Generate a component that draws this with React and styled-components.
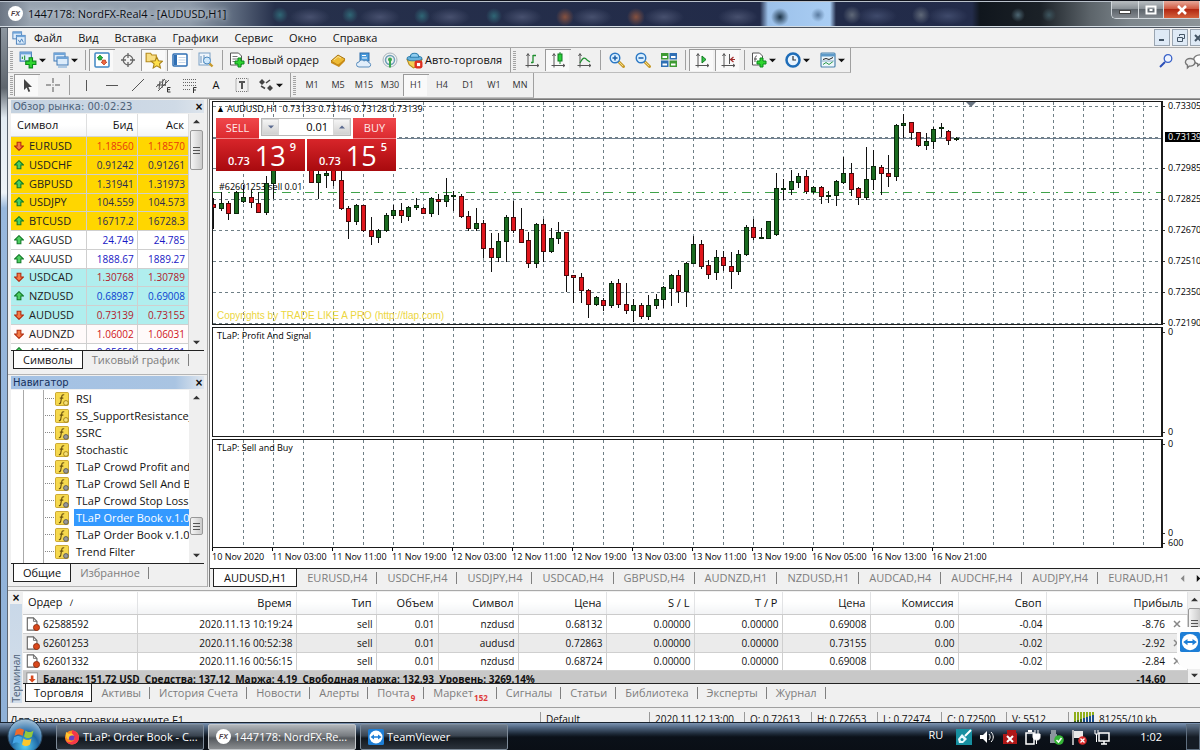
import React, { useState } from 'react';
import styled, { createGlobalStyle, css } from 'styled-components';

const GlobalStyle = createGlobalStyle`
  * {
    box-sizing: border-box;
  }
  body {
    margin: 0;
    background: #f0f0f0;
    font-family: 'Open Sans', 'Noto Sans', sans-serif;
    font-size: 11px;
    line-height: 16px;
    color: #111;
  }
  button, input {
    font: inherit;
    color: inherit;
    margin: 0;
    padding: 0;
    border: 0;
    background: none;
  }
  ul {
    list-style: none;
    margin: 0;
    padding: 0;
  }
`;

const Page = styled.div`
  display: flex;
  flex-direction: column;
  min-height: 100vh;
  overflow: hidden;
`;

/* ---------- title bar ---------- */

const TitleBar = styled.header`
  display: flex;
  align-items: flex-start;
  height: 28px;
  border-top: 1px solid #10131c;
  border-bottom: 1px solid #4b535e;
  box-shadow: inset 0 1px 0 #b9c1cb, inset 0 -1px 0 #d5dde4;
  background:
    radial-gradient(circle at 280px 14px, #2f6675 0, transparent 8px),
    radial-gradient(circle at 350px 14px, #2f6675 0, transparent 8px),
    radial-gradient(circle at 422px 15px, #2f6675 0, transparent 8px),
    radial-gradient(circle at 494px 15px, #2f6675 0, transparent 8px),
    radial-gradient(circle at 565px 16px, #86513f 0, transparent 9px),
    radial-gradient(circle at 636px 16px, #86513f 0, transparent 9px),
    radial-gradient(ellipse at 709px 15px, #a32a3c 0, transparent 10px),
    radial-gradient(circle at 780px 16px, #1d3448 0, transparent 9px),
    radial-gradient(circle at 818px 14px, #5a7ba0 0, transparent 7px),
    radial-gradient(circle at 852px 14px, #5f6878 0, transparent 9px),
    radial-gradient(circle at 921px 14px, #5f6878 0, transparent 9px),
    radial-gradient(circle at 1018px 14px, #4d6672 0, transparent 7px),
    radial-gradient(circle at 1049px 14px, #3d555e 0, transparent 7px),
    radial-gradient(ellipse 20px 9px at 310px 16px, #47506e, transparent),
    radial-gradient(ellipse 20px 9px at 380px 16px, #47506e, transparent),
    radial-gradient(ellipse 20px 9px at 450px 16px, #47506e, transparent),
    radial-gradient(ellipse 20px 9px at 522px 16px, #47506e, transparent),
    radial-gradient(ellipse 20px 9px at 592px 16px, #47506e, transparent),
    radial-gradient(ellipse 20px 9px at 664px 16px, #47506e, transparent),
    radial-gradient(ellipse 20px 9px at 738px 16px, #47506e, transparent),
    radial-gradient(ellipse 20px 9px at 877px 15px, #3f4a6b, transparent),
    radial-gradient(ellipse 20px 9px at 948px 15px, #3f4a6b, transparent),
    linear-gradient(90deg, #6c7684 0, #98a3b0 30px, #8e9aa9 190px, #5f6c80 232px, #26304b 275px, #222b49 760px,
      #9cc1ea 768px, #a9cdf3 830px, #222b49 836px, #232c4a 972px, #10161d 980px, #1b2127 1040px, #5c646a 1090px, #7d868c 1130px, #8c9499 100%);
`;

const TitleText = styled.h1`
  flex: 1;
  margin: 0;
  padding: 5px 0 0 5px;
  font-size: 11px;
  font-weight: 400;
  line-height: 16px;
  color: #0b0e14;
  text-shadow: 0 0 6px #d8e0e8, 0 0 4px #c4ced9;
  white-space: nowrap;
`;

const FxLogo = styled.span`
  flex: none;
  display: flex;
  align-items: center;
  justify-content: center;
  width: 15px;
  height: 15px;
  margin: ${p => p.$margin || '0'};
  border-radius: 50%;
  background: #fff;
  color: #4b3a44;
  font: italic 700 7px 'Liberation Sans', sans-serif;
`;

const WindowButtons = styled.div`
  display: flex;
  height: 18px;
  border: 1px solid #cfd5da;
  border-width: 0 0 1px 1px;
  border-radius: 0 0 0 5px;
  overflow: hidden;
`;

const WindowButton = styled.button`
  display: flex;
  align-items: center;
  justify-content: center;
  width: ${p => p.$width}px;
  border-right: 1px solid #d8dde0;
  background: ${p => p.$close
    ? 'linear-gradient(#e7a99a, #d15a42 45%, #b22812 50%, #d4613c)'
    : 'linear-gradient(#b9bec2, #8b9298 45%, #5d646b 50%, #83898f)'};
`;

/* ---------- client area ---------- */

const Frame = styled.div`
  flex: 1;
  display: grid;
  grid-template-columns: 8px 1fr;
`;

const Edge = styled.div`
  border-left: 1px solid #30353d;
  border-right: 1px solid #5b6470;
  background: linear-gradient(#8d969f 0, #5e656d 60px, #e3ebf2 90px, #eef3f8 165px, #98b8dd 180px, #8fb1d8 100%);
`;

const Client = styled.div`
  display: flex;
  flex-direction: column;
  min-width: 0;
  background: #f0f0f0;
`;

const MenuBar = styled.nav`
  display: flex;
  align-items: center;
  height: 20px;
  padding-left: 4px;
  background: #f2f2f2;
  border-bottom: 1px solid #a9a9a9;
`;

const MenuItem = styled.button`
  padding: 0 8px;
  font-size: 11px;
`;

const MdiButtons = styled.div`
  display: flex;
  gap: 2px;
  margin: 0 -6px 0 auto;
`;

const MdiButton = styled.button`
  display: flex;
  align-items: center;
  justify-content: center;
  width: 16px;
  height: 17px;
  border: 1px solid #9aa5b1;
  background: #dfeaf6;
`;

const ToolRow = styled.div`
  display: flex;
  height: 25px;
`;

const ToolStrip = styled.div`
  display: flex;
  align-items: center;
  padding-left: 2px;
  border-right: 1px solid #a0a0a0;
  border-bottom: 1px solid #bdbdbd;
`;

const Grip = styled.span`
  width: 3px;
  height: 19px;
  margin-right: ${p => (p.$tight ? 1 : 3)}px;
  background: repeating-linear-gradient(#a4a4a4 0 1px, #f0f0f0 1px 2px);
`;

const Divider = styled.span`
  width: 1px;
  height: 20px;
  margin: 0 3px;
  background: #a0a0a0;
`;

const ToolButton = styled.button`
  display: flex;
  align-items: center;
  justify-content: ${p => (p.$wide ? 'flex-start' : 'center')};
  gap: 2px;
  width: ${p => p.$wide || 26}px;
  height: 22px;
  padding-left: ${p => (p.$wide ? 3 : 0)}px;
  font-size: ${p => p.$size || 11}px;
  color: ${p => (p.$size ? '#333' : '#111')};
  white-space: nowrap;
  ${p => p.$pressed && css`
    background: #f9f9f9;
    box-shadow: inset 1px 1px 0 #9a9a9a, inset -2px 0 0 #f0f0f0;
  `}
`;

const RightTools = styled.div`
  display: flex;
  align-items: center;
  gap: 7px;
  margin: 0 -5px 0 auto;
`;

const Work = styled.main`
  flex: 1;
  display: grid;
  grid-template-columns: 200px 1fr;
  border-top: 1px solid #9c9c9c;
`;

/* ---------- side panels ---------- */

const Sidebar = styled.aside`
  display: flex;
  flex-direction: column;
  border-right: 1px solid #a8a8a8;
`;

const Panel = styled.section`
  display: flex;
  flex-direction: column;
  flex: ${p => p.$share} 1 0;
  padding: 1px 3px ${p => p.$bottom}px 3px;
  min-height: 120px;
  border-bottom: 1px solid #b5b5b5;
`;

const PanelTitle = styled.h2`
  display: flex;
  align-items: center;
  justify-content: space-between;
  height: 13px;
  margin: 0 0 1px;
  padding: 0 0 0 2px;
  font-size: 10px;
  font-weight: 400;
  font-family: 'DejaVu Sans', sans-serif;
  line-height: 12px;
  white-space: nowrap;
  color: ${p => (p.$active ? '#15305c' : '#4d6178')};
  background: ${p => (p.$active
    ? 'linear-gradient(90deg, #a3c1e4, #a9c4e2 85%, #dfe6ee)'
    : 'linear-gradient(90deg, #c4d2e0, #cfdae6 85%, #dde4ec)')};
`;

const CloseX = styled.button`
  font: 700 12px/10px 'Liberation Sans', sans-serif;
  width: 10px;
  color: #111;
`;

const PanelBody = styled.div`
  flex: 1 1 0;
  display: grid;
  grid-template-columns: 1fr 15px;
  min-height: 0;
  overflow: hidden;
  background: #fff;
`;

const Clip = styled.div`
  min-width: 0;
  min-height: 0;
  overflow: hidden;
`;

const ScrollTrack = styled.div`
  display: flex;
  flex-direction: column;
  justify-content: space-between;
  align-items: center;
  padding: 4px 1px;
  background: #efefef;
`;

const Thumb = styled.div`
  display: flex;
  align-items: center;
  justify-content: center;
  width: 13px;
  height: ${p => p.$size}px;
  margin-top: ${p => (p.$low ? 'auto' : '5px')};
  margin-bottom: ${p => (p.$low ? '17px' : 'auto')};
  border: 1px solid #989898;
  border-radius: 2px;
  background: linear-gradient(90deg, #f5f5f5, #dcdcdc 60%, #cbcbcb);
`;

const Watch = styled.table`
  width: 100%;
  table-layout: fixed;
  border-collapse: collapse;
  th {
    height: 22px;
    padding: 0 4px 0 6px;
    font-weight: 400;
    text-align: right;
    border-right: 1px solid #dedfe0;
    border-bottom: 1px solid #d5d5d5;
    background: linear-gradient(#fff 50%, #f3f4f6);
  }
  th:first-child {
    width: 75px;
    text-align: left;
  }
  td {
    padding: 0 3px;
    text-align: right;
    border-right: 1px solid #cfcfcf;
    border-bottom: 1px solid #cfcfcf;
    line-height: 14px;
  }
`;

const tones = { gold: '#ffd600', white: '#fff', aqua: '#b0eeee', snow: '#fffafa' };

const WatchRow = styled.tr`
  height: 19px;
  background: ${p => tones[p.$tone]};
  &:nth-child(4n) {
    height: 18px;
  }
  td {
    font-size: 10px;
    color: ${p => p.$color};
  }
`;

const SymbolName = styled.div`
  display: flex;
  align-items: center;
  gap: 5px;
  font-size: 11px;
  color: #222;
`;

const Tabs = styled.div`
  display: flex;
  height: ${p => p.$height || 19}px;
  padding-left: 2px;
  border-top: 1px solid #222;
  background: #f0f0f0;
  overflow: hidden;
  flex: none;
`;

const Tab = styled.button`
  display: flex;
  align-items: center;
  height: 18px;
  font-size: 11px;
  white-space: nowrap;
  color: #7d7d7d;
  padding: 0 ${p => p.$pad || 9}px;
  position: relative;
  &::after {
    content: '';
    width: 1px;
    height: 12px;
    background: #808080;
    position: absolute;
    right: 0;
    top: 3px;
  }
  ${p => p.$active && css`
    color: #111;
    background: #fff;
    border: 1px solid #222;
    border-top: 0;
    &::after { display: none; }
  `}
`;

const TabCount = styled.sub`
  align-self: flex-end;
  font: 700 8px/9px 'Open Sans', sans-serif;
  color: #e03a3a;
  margin-left: 1px;
`;

const Tree = styled.ul`
  height: 100%;
  padding-left: 12px;
  background:
    linear-gradient(90deg, transparent 12px, #aaa 12px 13px, transparent 13px 32px, #aaa 32px 33px, transparent 33px);
`;

const TreeItem = styled.li`
  display: flex;
  align-items: center;
  height: 17px;
  padding-left: 22px;
`;

const Branch = styled.span`
  flex: none;
  width: 9px;
  margin-right: 1px;
  border-top: 1px dotted #888;
`;

const TreeLabel = styled.button`
  flex: 1;
  height: 17px;
  margin-left: 5px;
  padding-left: 2px;
  text-align: left;
  white-space: nowrap;
  color: ${p => (p.$selected ? '#fff' : '#111')};
  background: ${p => (p.$selected ? '#3399ff' : 'transparent')};
`;

/* ---------- chart ---------- */

const ChartArea = styled.section`
  display: flex;
  flex-direction: column;
  min-width: 0;
  margin-left: 1px;
  border-left: 1px solid #777;
  border-top: 1px solid #777;
`;

const ChartBody = styled.div`
  flex: 1;
  display: flex;
  flex-direction: column;
  gap: 2px;
  padding: 1px 0 0 2px;
  background: #fff;
  font-size: 9px;
  line-height: 12px;
  color: #000;
`;

const PaneRow = styled.div`
  flex: ${p => p.$share} 1 0;
  display: grid;
  grid-template-columns: 1fr 37px;
  grid-template-rows: minmax(0, 1fr);
  min-height: 70px;
`;

const Plot = styled.div`
  position: relative;
  border: 1px solid #1b1b1b;
  border-right-width: 2px;
  overflow: hidden;
  > svg {
    position: absolute;
    left: 0;
    top: 0;
    width: 100%;
    height: 100%;
  }
`;

const PlotLabel = styled.span`
  position: absolute;
  left: ${p => p.$x}px;
  top: ${p => p.$y}px;
  white-space: pre;
`;

const Watermark = styled(PlotLabel)`
  top: auto;
  bottom: 2px;
  color: #ecd63f;
  font: 10px/13px 'Liberation Sans', sans-serif;
`;

const Axis = styled.ul`
  display: flex;
  flex-direction: column;
  gap: ${p => (p.$spread ? 0 : 21)}px;
  justify-content: ${p => (p.$spread ? 'space-between' : 'flex-start')};
  height: 100%;
`;

const AxisLabel = styled.li`
  flex: none;
  height: 10px;
  line-height: 10px;
  padding-left: 5px;
  margin-top: ${p => (p.$end ? 'auto' : 0)};
  color: ${p => (p.$tag ? '#fff' : '#000')};
  background: ${p => (p.$tag
    ? 'linear-gradient(90deg, #fff 2px, #000 2px)'
    : 'linear-gradient(#333, #333) 0 5px / 2px 1px no-repeat')};
`;

const TimeAxis = styled.div`
  display: flex;
  height: 20px;
  margin-top: -2px;
  overflow: hidden;
  span {
    flex: none;
    width: 60px;
    padding-top: 3px;
    white-space: nowrap;
    background: linear-gradient(#000, #000) 0 0 / 1px 3px no-repeat;
  }
`;

const ChartTabs = styled.div`
  display: flex;
  height: 19px;
  padding-left: 3px;
  border-top: 1px solid #222;
  overflow: hidden;
  button:last-of-type::after {
    display: none;
  }
`;

const TabArrows = styled.div`
  display: flex;
  align-items: center;
  gap: 9px;
  margin-left: auto;
`;

/* ---------- one click trading ---------- */

const TradePanel = styled.div`
  position: absolute;
  left: 3px;
  top: 16px;
  width: 181px;
  height: 53px;
  display: grid;
  grid-template-columns: 89px 89px;
  grid-template-rows: 21px 32px;
  column-gap: 2px;
  background: #fff;
`;

const TradeTop = styled.div`
  grid-column: 1 / 3;
  display: grid;
  grid-template-columns: 43px 1fr 43px;
  column-gap: 2px;
`;

const TradeSide = styled.button`
  border-bottom: 1px solid #f0868a;
  background: linear-gradient(#f0474b, #dc2b30);
  color: #ffe9e9;
  font-size: 11px;
`;

const TradePrice = styled.button`
  display: flex;
  align-items: flex-end;
  justify-content: center;
  padding: 0 0 2px 3px;
  background: linear-gradient(#d8252a, #a80a0e);
  color: #fff;
  small {
    font-size: 11px;
    font-weight: 600;
    line-height: 16px;
    margin-right: 5px;
  }
  big {
    font-size: 27px;
    line-height: 26px;
  }
  sup {
    align-self: flex-start;
    font-size: 11px;
    font-weight: 600;
    line-height: 16px;
    margin-left: 4px;
  }
`;

const Volume = styled.div`
  display: flex;
  height: 18px;
  border: 1px solid #b9b9b9;
  font-size: 11px;
  input {
    flex: 1;
    width: 0;
    padding-right: 5px;
    text-align: right;
    background: #fff;
  }
  button {
    display: flex;
    align-items: center;
    justify-content: center;
    width: 17px;
    background: linear-gradient(#f4f4f4, #d2d2d2);
    border: 1px solid #d8d8d8;
  }
`;

/* ---------- terminal ---------- */

const Terminal = styled.section`
  position: relative;
  display: grid;
  grid-template-columns: 13px 1fr;
  margin-top: 3px;
  padding: 1px 0 4px 2px;
  border-top: 1px solid #a9a9a9;
`;

const SideTitle = styled.div`
  display: flex;
  flex-direction: column;
  justify-content: space-between;
  align-items: center;
  padding-top: 1px;
  margin-right: 1px;
  background: linear-gradient(#f0f0f0 12px, #c9d8e8 12px, #d3deea);
  span {
    writing-mode: vertical-rl;
    transform: rotate(180deg);
    font-size: 10px;
    line-height: 11px;
    color: #4d6178;
  }
`;

const TerminalBody = styled.div`
  display: flex;
  flex-direction: column;
  min-width: 0;
`;

const OrdersView = styled.div`
  display: grid;
  grid-template-columns: 1fr 12px;
  height: 91px;
  overflow: hidden;
  background: #fff;
`;

const Orders = styled.table`
  width: 100%;
  table-layout: fixed;
  border-collapse: collapse;
  th {
    height: 22px;
    padding: 0 4px;
    font-weight: 400;
    text-align: right;
    border-right: 1px solid #e2e3e5;
    border-bottom: 1px solid #cbcbcb;
    background: linear-gradient(#fff 45%, #f2f3f5);
  }
  th:first-child {
    text-align: left;
    padding-left: 5px;
  }
  td {
    height: 18px;
    padding: 0 3px;
    font-size: 10px;
    line-height: 14px;
    text-align: right;
    white-space: nowrap;
    border-right: 1px solid #cfcfcf;
    border-bottom: 1px solid #cfcfcf;
  }
  tbody tr:nth-child(-n + 2) td {
    height: 19px;
  }
  tbody tr:nth-child(2) {
    background: #ebebeb;
  }
`;

const OrderId = styled.div`
  display: flex;
  align-items: center;
  gap: 3px;
`;

const ProfitCell = styled.div`
  display: flex;
  align-items: center;
  justify-content: flex-end;
  gap: 8px;
  padding-right: 3px;
`;

const BalanceRow = styled.tr`
  background: #c8c8c8;
  && td {
    height: 18px;
    font-size: 10px;
    font-weight: 700;
    border: 0;
  }
  && td:first-child {
    text-align: left;
  }
`;

const Remote = styled.button`
  position: absolute;
  right: 0;
  top: 36px;
  display: flex;
  width: 23px;
  height: 42px;
  padding: 5px 0 0 3px;
  background: #fdfdfd;
  border-radius: 3px 0 0 12px;
`;

const StatusBar = styled.footer`
  display: flex;
  height: 15px;
  padding-left: 2px;
  border-top: 1px solid #a0a0a0;
  overflow: hidden;
  white-space: nowrap;
  line-height: 15px;
`;

const StatusCell = styled.span`
  flex: ${p => (p.$width ? 'none' : 1)};
  width: ${p => (p.$width ? p.$width + 'px' : 'auto')};
  display: flex;
  align-items: flex-start;
  gap: 3px;
  margin-top: 4px;
  padding-left: ${p => (p.$width ? 5 : 0)}px;
  border-left: ${p => (p.$width ? '1px solid #999' : '0')};
  font-size: ${p => (p.$width ? 10 : 11)}px;
`;

/* ---------- taskbar ---------- */

const Taskbar = styled.nav`
  display: flex;
  align-items: center;
  gap: 4px;
  height: 28px;
  padding-left: 56px;
  position: relative;
  border-top: 1px solid #1a2430;
  background: linear-gradient(#7d94b2 0, #546a86 4px, #1c2836 11px, #0b1119 14px, #0a0f16 100%);
`;

const StartButton = styled.button`
  position: absolute;
  left: 7px;
  top: -5px;
  width: 36px;
  height: 33px;
  overflow: hidden;
`;

const TaskButton = styled.button`
  display: flex;
  align-items: center;
  gap: 3px;
  width: 148px;
  height: 26px;
  padding-left: 7px;
  font-size: 11px;
  color: #fff;
  white-space: nowrap;
  border: 1px solid ${p => (p.$active ? '#c4c8cc' : '#7d8a98')};
  border-radius: 2px;
  background: ${p => (p.$active
    ? 'linear-gradient(#b2b6ba, #777b80 45%, #54585d 55%, #8a8d90)'
    : 'linear-gradient(#6b7a8c, #39434f 45%, #12181f 55%, #2b333c)')};
`;

const Tray = styled.div`
  display: flex;
  align-items: center;
  gap: 7px;
  margin-left: auto;
  color: #fff;
`;

const Language = styled.span`
  margin: 0 6px 4px 0;
`;

const Clock = styled.time`
  margin: 0 17px 0 23px;
`;

const ShowDesktop = styled.button`
  width: 14px;
  height: 26px;
  border: 1px solid #5f6f80;
  background: linear-gradient(#5d7087, #151c25 50%);
`;

/* ---------- icons ---------- */

const Svg = ({ size = 16, children }) => (
  <svg width={size} height={size} viewBox="0 0 16 16" fill="none" style={{ flex: 'none' }}>{children}</svg>
);

const Plus = () => (
  <path d="M9 6h3v3h3v3h-3v3H9v-3H6V9h3z" fill="#2fd52f" stroke="#0b8a1c" strokeWidth="1" />
);

const Mini = ({ x, y, w, h }) => (
  <g>
    <rect x={x} y={y} width={w} height={h} fill="#dcecfb" stroke="#3f78b5" />
    <path d={`M${x} ${y + 1}h${w}`} stroke="#6fa4d8" strokeWidth="2" />
  </g>
);

const Axes = ({ children }) => (
  <Svg>
    <path d="M4 2v11.500H15M1.500 13.500H4M4 13v2.500" stroke="#555" />
    <path d="M2.500 4L4 1.500 5.500 4M13 12l2 1.500-2 1.500" stroke="#555" />
    {children}
  </Svg>
);

const Lens = ({ children }) => (
  <Svg>
    <path d="M10 10l4.500 4.500" stroke="#c79a2c" strokeWidth="3" strokeLinecap="round" />
    <path d="M10 10l4 4" stroke="#f4dc80" strokeWidth="1" />
    <circle cx="6" cy="6" r="4.800" fill="#d9efff" stroke="#2c78c4" strokeWidth="1.400" />
    {children}
  </Svg>
);

const icons = {
  app: <Svg size={14}><Mini x={1} y={1} w={10} h={8} /><Mini x={5} y={5} w={10} h={10} /><path d="M7 10l2 3 2-4 2 4" stroke="#3f78b5" /></Svg>,
  newChart: <Svg size={18}><Mini x={1} y={1} w={10} h={8} /><path d="M3 7V5M5 8V4" stroke="#2f9e3a" /><Plus /></Svg>,
  profiles: <Svg><Mini x={1} y={1} w={11} h={8} /><Mini x={4} y={5} w={11} h={8} /><path d="M5 15h9" stroke="#6fa4d8" /></Svg>,
  market: <Svg><rect x="1" y="1" width="14" height="14" rx="1" fill="#fff" stroke="#3f86c4" strokeWidth="1.500" /><path d="M6 3l3 3H7.500v2h-3V6H3z" fill="#25b43b" stroke="#0d7a20" strokeWidth=".6" /><path d="M10 13l3-3h-1.500V8h-3v2H7z" fill="#f06a40" stroke="#b02c10" strokeWidth=".6" /></Svg>,
  target: <Svg><circle cx="8" cy="8" r="4.800" stroke="#666" strokeWidth="1.300" /><path d="M8 1v5M8 10v5M1 8h5M10 8h5" stroke="#666" strokeWidth="1.300" /></Svg>,
  favorites: <Svg size={18}><path d="M1 2h4l1 1.500h4v6H1z" fill="#f8de83" stroke="#b58a1d" /><path d="M10.500 5.500l1.500 3.200 3.500.4-2.600 2.400.8 3.500-3.200-1.800L7.300 15l.8-3.500L5.500 9.100l3.500-.4z" fill="#ffe04a" stroke="#a9821a" /></Svg>,
  navigator: <Svg><rect x="1" y="2" width="14" height="12" rx="1" fill="#fff" stroke="#2f6fb4" strokeWidth="1.500" /><path d="M3.500 3v10" stroke="#2f6fb4" strokeWidth="3" /><path d="M6.500 5.500h7M6.500 8h7M6.500 10.500h7" stroke="#c3d6ea" /></Svg>,
  tester: <Svg><rect x="1" y="1" width="11" height="12" fill="#eef5fc" stroke="#7aa0c4" /><path d="M3 4v7M6 3v8M9 5v5" stroke="#6d94bb" /><path d="M11.500 11.500l3 3" stroke="#c79a2c" strokeWidth="2.400" /><circle cx="9" cy="8.500" r="3.500" fill="#cfe8fb" stroke="#4c89bf" /></Svg>,
  order: <Svg><path d="M1.500 1h8l3 3v9h-11z" fill="#fff" stroke="#555" /><path d="M3.500 4.500h5M3.500 7h6M3.500 9.500h3" stroke="#777" /><Plus /></Svg>,
  gold: <Svg><path d="M1 9l7-6 7 4-6 7z" fill="#eebb35" stroke="#a87412" /><path d="M1 9l7 3.500L15 7v2l-6 6-8-4z" fill="#c98c18" /><path d="M4 8l4-3.500 3 1.500" stroke="#fbe49a" /></Svg>,
  signals: <Svg><rect x="4" y="1" width="9" height="8" fill="#4a9bdc" stroke="#2b6aa8" /><path d="M6 3.500h4M6 6h5" stroke="#fff" /><path d="M3 15a2.500 2.500 0 010-5 3 3 0 015-1 3 3 0 014.500 1.500A2.300 2.300 0 0113 15z" fill="#e2eefa" stroke="#5a8dbd" /></Svg>,
  radio: <Svg><circle cx="8" cy="8" r="7" stroke="#a8b4bd" /><circle cx="8" cy="8" r="4.500" stroke="#6fa0b8" strokeWidth="1.500" /><circle cx="8" cy="7.500" r="2" fill="#3aa64d" /><path d="M8 8v7.500" stroke="#3aa64d" strokeWidth="2" /></Svg>,
  auto: <Svg size={17}><path d="M1 7h14l-3 6-5 2-4-3z" fill="#f3cf52" stroke="#b58a1d" /><ellipse cx="8" cy="6" rx="7" ry="2.300" fill="#69b3dd" stroke="#2f7fae" /><path d="M4 5c0-5 8-5 8 0z" fill="#8fcdf0" stroke="#2f7fae" /><rect x="8" y="8" width="7.500" height="7.500" rx="2" fill="#dd2f1f" /><rect x="10.300" y="10.300" width="3" height="3" fill="#fff" /></Svg>,
  bars: <Axes><path d="M9 3v8M9 3.500h3M7 10.500h2" stroke="#1f8f2f" strokeWidth="1.300" /></Axes>,
  candles: <Axes><path d="M10 0v12" stroke="#1f8f2f" /><rect x="8" y="2" width="4" height="7" fill="#2ad13c" stroke="#117a20" /></Axes>,
  line: <Axes><path d="M4 11c3-6 5-6 7-3l3 2" stroke="#1f8f2f" strokeWidth="1.200" /></Axes>,
  zoomIn: <Lens><path d="M3.500 6h5M6 3.500v5" stroke="#1b5fa8" strokeWidth="1.500" /></Lens>,
  zoomOut: <Lens><path d="M3.500 6h5" stroke="#1b5fa8" strokeWidth="1.500" /></Lens>,
  tile: <Svg><rect x="0" y="1" width="7.500" height="6.500" fill="#3d9a32" /><rect x="8.500" y="1" width="7.500" height="6.500" fill="#2f6fb4" /><rect x="0" y="8.500" width="7.500" height="6.500" fill="#2f6fb4" /><rect x="8.500" y="8.500" width="7.500" height="6.500" fill="#3d9a32" /><path d="M1.500 5h4.500M10 5h4.500M1.500 12.500h4.500M10 12.500h4.500" stroke="#fff" strokeWidth="2" /></Svg>,
  scroll: <Axes><path d="M8 4l4 3.500L8 11z" fill="#35c447" stroke="#117a20" /></Axes>,
  shift: <Axes><path d="M9.500 2v10" stroke="#555" /><path d="M15 7.500h-4M13.500 5l-3 2.500 3 2.500" stroke="#a02a2a" strokeWidth="1.200" /></Axes>,
  indicators: <Svg><path d="M1.500 1h7l3 3v9h-10z" fill="#fff" stroke="#555" /><path d="M6 4c-2 0-2 1-2 6M3 7h3" stroke="#555" /><Plus /></Svg>,
  clock: <Svg><circle cx="8" cy="8" r="6.500" fill="#eaf5ff" stroke="#1f6db8" strokeWidth="2.500" /><path d="M8 4v4h3" stroke="#333" strokeWidth="1.200" /></Svg>,
  template: <Svg><rect x="1" y="1" width="14" height="14" rx="1" fill="#eef7fb" stroke="#4d83ad" strokeWidth="1.200" /><path d="M1 3h14" stroke="#5e9ac8" strokeWidth="3" /><path d="M3 7.500l3-1 3 1 4-2" stroke="#222" /><path d="M3 12.500l3-2 3 2 4-3" stroke="#2a9a4a" /><path d="M2 9h12" stroke="#8fb3cc" /></Svg>,
  search: <Svg><path d="M7 9l-5 5" stroke="#2b4fb8" strokeWidth="2" /><circle cx="10" cy="5.500" r="3.800" fill="#eef4ff" stroke="#3a62c8" strokeWidth="1.300" /></Svg>,
  chat: <Svg size={22}><path d="M7 7a4.500 3.500 0 119 0 4.500 3.500 0 01-4 3l-2 1.500V10A4.500 3.500 0 017 7z" fill="#fff" stroke="#777" /><path d="M1 9a3.500 2.800 0 117 0 3.500 2.800 0 01-4 2.700L2.500 13v-2A3 3 0 011 9z" fill="#eee" stroke="#777" /></Svg>,
  cursor: <Svg><path d="M5 2v11l2.700-2.400L9.500 15l1.700-.8L9.400 10H13z" fill="#444" /></Svg>,
  cross: <Svg><path d="M8 1v5M8 10v5M1 8h5M10 8h5" stroke="#555" /><rect x="7.500" y="7.500" width="1" height="1" fill="#555" /></Svg>,
  vline: <Svg><path d="M8.500 3v11" stroke="#555" /></Svg>,
  hline: <Svg><path d="M2 8.500h12" stroke="#555" /></Svg>,
  slope: <Svg><path d="M2 14L14 2" stroke="#555" /></Svg>,
  channel: <Svg><path d="M0 10L9 2M2 14L13 3M4 4L3 12M7 2L6 11M10 3L9 9M1 8h9" stroke="#555" /><path d="M14.500 10.500h-3v4.500h3M11.500 12.700h2.500" stroke="#333" /></Svg>,
  fibo: <Svg><path d="M1 2.500h14M1 5.500h14M1 8.500h14M1 12.500h8" stroke="#666" strokeDasharray="1 1" /><path d="M14.500 10.500h-3V16M11.500 13h2.500" stroke="#333" /></Svg>,
  label: <Svg><rect x="2" y="1.500" width="12" height="13" stroke="#777" strokeDasharray="1 1" /><path d="M5 5h6M8 5v7" stroke="#555" strokeWidth="2" /></Svg>,
  arrows: <Svg><path d="M4 2l3 3-3 3-3-3z M12 8l3 3-3 3-3-3z" fill="#444" /><path d="M3 9l4 2.500M12 3L8 6" stroke="#444" strokeWidth="1.500" /></Svg>,
};

const Up = () => (
  <Svg size={10}><path d="M8 1l7 7h-4v6H5V8H1z" fill="#4ccf60" stroke="#127a28" strokeWidth="1.700" /></Svg>
);
const Down = () => (
  <Svg size={10}><path d="M8 15l7-7h-4V2H5v6H1z" fill="#f47a45" stroke="#b32c10" strokeWidth="1.700" /></Svg>
);

const Caret = ({ dir = 'down', color = '#111', size = 7 }) => {
  const shapes = { down: 'M0 2h8L4 6z', up: 'M0 6h8L4 2z', left: 'M6 0v8L2 4z', right: 'M2 0v8l4-4z' };
  return <svg width={size} height={size} viewBox="0 0 8 8" style={{ flex: 'none' }}><path d={shapes[dir]} fill={color} /></svg>;
};

const Lines = () => (
  <svg width="7" height="8" viewBox="0 0 7 8"><path d="M0 1.500h7M0 4.500h7M0 7.500h7" stroke="#555" /></svg>
);

const FunctionIcon = ({ custom }) => (
  <Svg size={14}>
    <rect x=".5" y=".5" width="15" height="15" rx="1.500" fill="#f6d94e" stroke="#c39d1f" />
    <path d="M10.500 3.500c-2-1-2.600.5-3 3L6.500 12c-.3 1.200-1 1.500-2 1M5.500 7h4" stroke="#6b5310" strokeWidth="1.300" />
    <circle cx="12.500" cy="12.500" r="2.700" fill={custom ? '#999' : '#f6e27a'} stroke={custom ? '#555' : '#a07d14'} />
  </Svg>
);

const TeamViewerIcon = ({ size = 16 }) => (
  <Svg size={size}>
    <rect width="16" height="16" rx="1.500" fill="#1d7ed6" />
    <circle cx="8" cy="8" r="6.500" fill="#fff" />
    <path d="M2.500 8l3.500-2.500v1.700h4V5.500L13.500 8 10 10.500V8.800H6v1.700z" fill="#1d7ed6" />
  </Svg>
);

const Orb = () => (
  <svg width="36" height="36" viewBox="0 0 36 36">
    <defs>
      <radialGradient id="orb" cx="50%" cy="80%" r="80%">
        <stop offset="0" stopColor="#57d0f5" />
        <stop offset=".5" stopColor="#1f67a4" />
        <stop offset="1" stopColor="#a9c6dc" />
      </radialGradient>
    </defs>
    <circle cx="18" cy="18" r="17" fill="url(#orb)" stroke="#2b4861" />
    <path d="M9 12c3-2 5-2 8 0l-1.500 6c-3-2-5-2-8 0z" fill="#ee6a2c" />
    <path d="M18.500 12.500c3 2 5 2 8 0L25 18.500c-3 2-5 2-8 0z" fill="#95c83d" />
    <path d="M7 19.500c3-2 5-2 8 0L13.500 26c-3-2-5-2-8 0z" fill="#46a7e6" />
    <path d="M16.500 20.500c3 2 5 2 8 0L23 26.500c-3 2-5 2-8 0z" fill="#fbc72d" />
  </svg>
);

const Firefox = () => (
  <Svg>
    <circle cx="8" cy="8.500" r="7" fill="#ff8a1f" />
    <path d="M8 1c4 1 7 4 7 8 0 3-3 6.500-7 6.500S1 12 1 9c0 3 3 5 6 4 4-1 5-5 1-8z" fill="#f5374a" />
    <circle cx="7.500" cy="8.500" r="3" fill="#6b3fc6" />
    <path d="M2 3l3 2c3-1 4 0 5 2-3-1-5 0-5 2 0 3-4 0-3-6z" fill="#ffc531" />
  </Svg>
);

const trayIcons = [
  <Svg key="brush"><rect width="16" height="16" fill="#178fa0" /><path d="M15 1L9 7" stroke="#fff" strokeWidth="2" /><path d="M6 5l5 5-4 4H3l-1-4z" fill="#e8fbff" /><circle cx="6" cy="10.500" r="1.500" fill="#178fa0" /></Svg>,
  <Svg key="volume"><path d="M1 6h3l4-4v12l-4-4H1z" fill="#fff" /><path d="M10 5c1.500 2 1.500 4 0 6M12 3c3 3 3 7 0 10" stroke="#fff" /></Svg>,
  <Svg key="error"><path d="M5 1h9v3h1v11H1V5h4z" fill="#b01818" /><path d="M5 7l6 6M11 7l-6 6" stroke="#fff" strokeWidth="2" /></Svg>,
  <Svg key="power"><rect x="1" y="4" width="8" height="11" stroke="#fff" strokeWidth="1.500" /><path d="M3 2h4" stroke="#fff" strokeWidth="2" /><path d="M8 5h7v3c0 2-1 3-3 3s-4-1-4-3zM10 5V1M13 5V1M11.500 11v4" fill="#fff" stroke="#fff" /></Svg>,
  <Svg key="usb"><path d="M3 1h5v4H3zM2 5h7v9H2z" fill="#8d969e" /><circle cx="11" cy="11" r="4.800" fill="#35b536" /><path d="M8.500 11l2 2 3-4" stroke="#fff" strokeWidth="1.500" /></Svg>,
  <Svg key="flag"><path d="M2 1v15" stroke="#ddd" strokeWidth="1.500" /><path d="M3 2h9v7H3z" fill="#e8e8e8" /><circle cx="11.500" cy="11.500" r="4.300" fill="#d92b2b" /><path d="M9.500 9.500l4 4M13.500 9.500l-4 4" stroke="#fff" strokeWidth="1.300" /></Svg>,
  <Svg key="network"><path d="M5 4h10v8H5zM7 15h6M10 12v3" stroke="#fff" strokeWidth="1.500" /><path d="M1 1v4h3V1M2.500 5v8" stroke="#fff" /></Svg>,
];

/* ---------- data ---------- */

const quotes = [
  ['EURUSD', '1.18560', '1.18570', 'gold', '#e8380d', false],
  ['USDCHF', '0.91242', '0.91261', 'gold', '#2b2a55', true],
  ['GBPUSD', '1.31941', '1.31973', 'gold', '#2b2a55', true],
  ['USDJPY', '104.559', '104.573', 'gold', '#2b2a55', true],
  ['BTCUSD', '16717.2', '16728.3', 'gold', '#2b2a55', true],
  ['XAGUSD', '24.749', '24.785', 'white', '#1717c4', true],
  ['XAUUSD', '1888.67', '1889.27', 'white', '#1717c4', true],
  ['USDCAD', '1.30768', '1.30789', 'aqua', '#b3202c', false],
  ['NZDUSD', '0.68987', '0.69008', 'aqua', '#0a3fd0', true],
  ['AUDUSD', '0.73139', '0.73155', 'aqua', '#b3202c', false],
  ['AUDNZD', '1.06002', '1.06031', 'snow', '#cf1420', false],
  ['AUDCAD', '0.95650', '0.95681', 'white', '#1717c4', true],
];

const indicators = [
  ['RSI', false],
  ['SS_SupportResistance_v', false],
  ['SSRC', true],
  ['Stochastic', false],
  ['TLaP Crowd Profit and', true],
  ['TLaP Crowd Sell And B', true],
  ['TLaP Crowd Stop Loss', true],
  ['TLaP Order Book v.1.09', true],
  ['TLaP Order Book v.1.09', true],
  ['Trend Filter', true],
];

const orders = [
  ['62588592', '2020.11.13 10:19:24', 'sell', '0.01', 'nzdusd', '0.68132', '0.00000', '0.00000', '0.69008', '0.00', '-0.04', '-8.76'],
  ['62601253', '2020.11.16 00:52:38', 'sell', '0.01', 'audusd', '0.72863', '0.00000', '0.00000', '0.73155', '0.00', '-0.02', '-2.92'],
  ['62601332', '2020.11.16 00:56:15', 'sell', '0.01', 'nzdusd', '0.68724', '0.00000', '0.00000', '0.69008', '0.00', '-0.02', '-2.84'],
];

const orderColumns = [
  ['Ордер', 114], ['Время', 159], ['Тип', 80], ['Объем', 62], ['Символ', 80], ['Цена', 88],
  ['S / L', 88], ['T / P', 88], ['Цена', 88], ['Комиссия', 88], ['Своп', 88], ['Прибыль', 142],
];

const chartTabs = ['AUDUSD,H1', 'EURUSD,H4', 'USDCHF,H4', 'USDJPY,H4', 'USDCAD,H4', 'GBPUSD,H4', 'AUDNZD,H1',
  'NZDUSD,H1', 'AUDCAD,H4', 'AUDCHF,H4', 'AUDJPY,H4', 'EURAUD,H1'];

const terminalTabs = [['Торговля'], ['Активы'], ['История Счета'], ['Новости'], ['Алерты'], ['Почта', 9], ['Маркет', 152],
  ['Сигналы'], ['Статьи'], ['Библиотека'], ['Эксперты'], ['Журнал']];

const prices = ['0.73305', '0.73139', '0.72985', '0.72825', '0.72670', '0.72510', '0.72350', '0.72190'];

const times = ['10 Nov 2020', '11 Nov 03:00', '11 Nov 11:00', '11 Nov 19:00', '12 Nov 03:00', '12 Nov 11:00', '12 Nov 19:00',
  '13 Nov 03:00', '13 Nov 11:00', '13 Nov 19:00', '16 Nov 05:00', '16 Nov 13:00', '16 Nov 21:00'];

const timeframes = ['M1', 'M5', 'M15', 'M30', 'H1', 'H4', 'D1', 'W1', 'MN'];

// direction, high, body top, body bottom, low
const candles = `
d 97 103 106 127|u 91 102 107 109|d 100 102 112 118|u 90 91 112 112|u 84 96 100 101|d 89 96 101 106|d 91 102 111 111|u 75 82 111 113
u 60 66 82 97|u 40 50 60 66|u 38 44 52 60|d 38 42 50 58|d 42 48 58 64|d 58 62 81 81|u 64 73 81 97|u 62 72 74 86
d 60 66 79 84|d 66 79 107 108|d 105 107 120 137|u 103 104 120 123|d 104 104 129 130|d 116 129 135 143|u 128 129 136 141|u 112 114 129 130
u 104 109 114 117|d 102 109 114 121|u 105 106 115 119|u 97 104 106 108|d 106 107 112 112|u 96 97 112 115|d 93 98 100 113|u 77 94 100 105
u 90 94 95 109|d 93 95 115 116|d 110 115 127 129|u 107 122 127 129|d 119 122 147 156|d 132 147 156 170|u 132 140 156 160|u 114 116 140 160
d 100 116 129 131|d 107 128 141 141|d 131 139 162 166|u 122 123 162 166|d 118 123 150 160|u 127 137 150 151|u 121 131 137 142|d 131 131 174 190
d 174 174 176 201|d 172 176 189 201|d 188 189 203 216|u 195 196 203 204|d 197 199 204 209|u 180 182 204 206|d 178 182 203 206|d 182 203 209 212
u 198 204 209 220|d 202 204 215 217|u 194 204 215 218|u 193 198 204 207|u 185 186 198 206|u 173 174 187 204|d 169 174 190 201|u 161 162 190 205
u 135 143 162 162|d 139 143 165 167|d 159 164 173 177|u 149 156 171 178|d 150 156 164 169|d 151 165 170 187|u 149 153 170 173|u 124 126 153 154
d 118 126 136 138|u 127 136 137 137|u 120 120 137 137|u 72 87 133 134|u 78 87 88 98|u 69 80 88 93|u 72 75 81 86|d 69 75 90 92
u 85 86 90 92|d 85 86 95 102|u 90 94 95 101|u 79 80 94 104|u 56 72 81 82|d 62 72 88 94|d 86 87 96 103|u 46 78 96 98
u 49 65 78 88|d 64 66 72 93|d 54 72 75 85|u 23 24 75 79|u 13 22 24 36|d 21 21 31 38|d 31 31 44 45|u 32 40 44 48
u 26 28 40 47|u 22 26 27 35|d 29 30 39 43|u 36 37 38 39`
  .trim()
  .split(/[|\n]/)
  .map(row => {
    const [dir, ...levels] = row.split(' ');
    return [dir, ...levels.map(Number)];
  });

const columns = Array.from({ length: 70 }, (_, i) => 30 + i * 30);
const rows = Array.from({ length: 8 }, (_, i) => 4 + i * 31);

/* ---------- parts ---------- */

const Grid = () => (
  <g stroke="#6f7f86" strokeDasharray="3 3">
    {columns.map(x => <line key={x} x1={x + 0.5} x2={x + 0.5} y1="0" y2="100%" />)}
  </g>
);

const Candles = () => candles.map(([dir, high, top, bottom, low], i) => {
  const x = Math.round(i * 7.5);
  return (
    <g key={i}>
      <line x1={x + 0.5} x2={x + 0.5} y1={high - 1} y2={low} stroke="#111" />
      <rect
        x={x - 1.5}
        y={top - 0.5}
        width="4"
        height={Math.max(bottom - top, 1)}
        fill={dir === 'u' ? '#1a6b1f' : '#e0151c'}
        stroke={dir === 'u' ? '#0a2a0c' : '#4a0a0c'}
      />
    </g>
  );
});

const Tool = ({ name, caret, text, ...rest }) => (
  <ToolButton aria-label={text || name} {...rest}>
    {icons[name]}
    {text}
    {caret && <Caret />}
  </ToolButton>
);

const Scroll = ({ size, low }) => (
  <ScrollTrack>
    <Caret dir="up" color="#333" />
    <Thumb $size={size} $low={low}><Lines /></Thumb>
    <Caret color="#333" />
  </ScrollTrack>
);

const Toolbars = () => {
  const [frame, setFrame] = useState('H1');
  return (
    <>
      <ToolRow>
        <ToolStrip>
          <Grip />
          <Tool name="newChart" $wide={34} caret />
          <Tool name="profiles" $wide={32} caret />
          <Divider />
          <Tool name="market" $pressed />
          <Tool name="target" />
          <Tool name="favorites" $pressed />
          <Tool name="navigator" $pressed />
          <Tool name="tester" />
          <Divider />
          <Tool name="order" text="Новый ордер" $wide={99} />
          <Tool name="gold" />
          <Tool name="signals" />
          <Tool name="radio" />
          <Tool name="auto" text="Авто-торговля" $wide={107} />
        </ToolStrip>
        <ToolStrip>
          <Grip />
          <Tool name="bars" />
          <Tool name="candles" $pressed />
          <Tool name="line" />
          <Divider />
          <Tool name="zoomIn" />
          <Tool name="zoomOut" />
          <Tool name="tile" />
          <Divider />
          <Tool name="scroll" $pressed />
          <Tool name="shift" $pressed />
          <Divider />
          <Tool name="indicators" $wide={34} caret />
          <Tool name="clock" $wide={35} caret />
          <Tool name="template" $wide={33} caret />
        </ToolStrip>
        <RightTools>
          <ToolButton $wide={19} aria-label="Поиск">{icons.search}</ToolButton>
          <ToolButton $wide={24} aria-label="Чат">{icons.chat}</ToolButton>
        </RightTools>
      </ToolRow>
      <ToolRow>
        <ToolStrip>
          <Grip $tight />
          <Tool name="cursor" $pressed />
          <Tool name="cross" />
          <Divider />
          <Tool name="vline" />
          <Tool name="hline" />
          <Tool name="slope" />
          <Tool name="channel" />
          <Tool name="fibo" />
          <ToolButton>A</ToolButton>
          <Tool name="label" />
          <Tool name="arrows" $wide={35} caret />
        </ToolStrip>
        <ToolStrip>
          <Grip />
          {timeframes.map(t => (
            <ToolButton key={t} $size={9} $pressed={t === frame} onClick={() => setFrame(t)}>{t}</ToolButton>
          ))}
        </ToolStrip>
      </ToolRow>
    </>
  );
};

const MarketWatch = () => (
  <Panel $share={277} $bottom={5}>
    <PanelTitle>Обзор рынка: 00:02:23<CloseX aria-label="Закрыть">×</CloseX></PanelTitle>
    <PanelBody>
      <Clip>
        <Watch>
          <thead>
            <tr><th>Символ</th><th>Бид</th><th>Аск</th></tr>
          </thead>
          <tbody>
            {quotes.map(([name, bid, ask, tone, color, up]) => (
              <WatchRow key={name} $tone={tone} $color={color}>
                <td><SymbolName>{up ? <Up /> : <Down />}{name}</SymbolName></td>
                <td>{bid}</td>
                <td>{ask}</td>
              </WatchRow>
            ))}
          </tbody>
        </Watch>
      </Clip>
      <Scroll size={40} />
    </PanelBody>
    <Tabs>
      <Tab $active>Символы</Tab>
      <Tab>Тиковый график</Tab>
    </Tabs>
  </Panel>
);

const Navigator = () => {
  const [selected, setSelected] = useState(7);
  return (
    <Panel $share={212} $bottom={4}>
      <PanelTitle $active>Навигатор<CloseX aria-label="Закрыть">×</CloseX></PanelTitle>
      <PanelBody>
        <Clip>
          <Tree>
            {indicators.map(([name, custom], i) => (
              <TreeItem key={i}>
                <Branch />
                <FunctionIcon custom={custom} />
                <TreeLabel $selected={i === selected} onClick={() => setSelected(i)}>{name}</TreeLabel>
              </TreeItem>
            ))}
          </Tree>
        </Clip>
        <Scroll size={18} low />
      </PanelBody>
      <Tabs>
        <Tab $active>Общие</Tab>
        <Tab>Избранное</Tab>
      </Tabs>
    </Panel>
  );
};

const OneClick = () => (
  <TradePanel>
    <TradeTop>
      <TradeSide>SELL</TradeSide>
      <Volume>
        <button aria-label="Меньше"><Caret color="#5a6a90" size={6} /></button>
        <input aria-label="Объем" defaultValue="0.01" />
        <button aria-label="Больше"><Caret dir="up" color="#5a6a90" size={6} /></button>
      </Volume>
      <TradeSide>BUY</TradeSide>
    </TradeTop>
    <TradePrice><small>0.73</small><big>13</big><sup>9</sup></TradePrice>
    <TradePrice><small>0.73</small><big>15</big><sup>5</sup></TradePrice>
  </TradePanel>
);

const Chart = () => (
  <ChartArea>
    <ChartBody>
      <PaneRow $share={224}>
        <Plot>
          <svg>
            <Grid />
            <g stroke="#6f7f86" strokeDasharray="3 3">
              {rows.map(y => <line key={y} x1="0" x2="100%" y1={y + 0.5} y2={y + 0.5} />)}
            </g>
            <line x1="0" x2="100%" y1="36.5" y2="36.5" stroke="#708090" />
            <line x1="0" x2="100%" y1="90.5" y2="90.5" stroke="#3fa34a" strokeDasharray="9 6 2 6" />
            <Candles />
            <path d="M753 0h10l-5 5z" fill="#6b7683" />
          </svg>
          <PlotLabel $x={3} $y={1}>▲</PlotLabel>
          <PlotLabel $x={14} $y={1}>{'AUDUSD,H1  0.73133 0.73146 0.73128 0.73139'}</PlotLabel>
          <PlotLabel $x={6} $y={79}>#62601253 sell 0.01</PlotLabel>
          <Watermark $x={4}>Copyrights by TRADE LIKE A PRO (http://tlap.com)</Watermark>
          <OneClick />
        </Plot>
        <Axis>
          {prices.map((p, i) => <AxisLabel key={p} $tag={i === 1}>{p}</AxisLabel>)}
        </Axis>
      </PaneRow>
      <PaneRow $share={110}>
        <Plot>
          <svg><Grid /></svg>
          <PlotLabel $x={4} $y={2}>TLaP: Profit And Signal</PlotLabel>
        </Plot>
        <Axis $spread><AxisLabel>0</AxisLabel><AxisLabel>0</AxisLabel></Axis>
      </PaneRow>
      <PaneRow $share={109}>
        <Plot>
          <svg><Grid /></svg>
          <PlotLabel $x={4} $y={2}>TLaP: Sell and Buy</PlotLabel>
        </Plot>
        <Axis $spread><AxisLabel>0</AxisLabel><AxisLabel $end>0</AxisLabel><AxisLabel>600</AxisLabel></Axis>
      </PaneRow>
      <TimeAxis>{times.map(t => <span key={t}>{t}</span>)}</TimeAxis>
    </ChartBody>
    <ChartTabs>
      {chartTabs.map((t, i) => <Tab key={t} $active={i === 0} $pad={10}>{t}</Tab>)}
      <TabArrows><Caret dir="left" color="#888" /><Caret dir="right" /></TabArrows>
    </ChartTabs>
  </ChartArea>
);

const OrderIcon = () => (
  <Svg size={14}>
    <path d="M1.500 1h7l4 4v10h-11z" fill="#fff" stroke="#666" strokeWidth="1.300" />
    <path d="M8.500 1v4h4" stroke="#666" />
    <circle cx="12" cy="12" r="3.500" fill="#d9481c" stroke="#8c2a0c" />
  </Svg>
);

const TerminalPanel = () => (
  <Terminal>
    <SideTitle><CloseX aria-label="Закрыть">×</CloseX><span>Терминал</span></SideTitle>
    <TerminalBody>
      <OrdersView>
        <Clip>
          <Orders>
            <colgroup>
              {orderColumns.map(([, width], i) => <col key={i} width={i === 11 ? undefined : width} />)}
            </colgroup>
            <thead>
              <tr>{orderColumns.map(([name], i) => <th key={i}>{name}{i === 0 && <small>{'\u00a0\u00a0\u00a0∕'}</small>}</th>)}</tr>
            </thead>
            <tbody>
              {orders.map(order => (
                <tr key={order[0]}>
                  {order.map((value, i) => (
                    <td key={i}>
                      {i === 0 && <OrderId><OrderIcon />{value}</OrderId>}
                      {i === 11 && (
                        <ProfitCell>
                          {value}
                          <svg width="8" height="8" viewBox="0 0 8 8"><path d="M1 1l6 6M7 1L1 7" stroke="#888" strokeWidth="1.500" /></svg>
                        </ProfitCell>
                      )}
                      {i > 0 && i < 11 && value}
                    </td>
                  ))}
                </tr>
              ))}
              <BalanceRow>
                <td colSpan={11}>
                  <OrderId>
                    <Svg size={14}><rect x="1" y="1" width="12" height="14" fill="#fff" stroke="#888" /><path d="M7 12l4-4H8.500V4h-3v4H3z" fill="#d9481c" /></Svg>
                    Баланс: 151.72 USD&nbsp; Средства: 137.12&nbsp; Маржа: 4.19&nbsp; Свободная маржа: 132.93&nbsp; Уровень: 3269.14%
                  </OrderId>
                </td>
                <td><ProfitCell>-14.60<svg width="8" height="8" /></ProfitCell></td>
              </BalanceRow>
            </tbody>
          </Orders>
        </Clip>
        <Scroll size={30} />
      </OrdersView>
      <Tabs $height={20}>
        {terminalTabs.map(([name, count], i) => (
          <Tab key={name} $active={i === 0} $pad={i === 0 ? 8 : 9}>{name}{count && <TabCount>{count}</TabCount>}</Tab>
        ))}
      </Tabs>
    </TerminalBody>
    <Remote aria-label="TeamViewer"><TeamViewerIcon size={20} /></Remote>
  </Terminal>
);

const Traffic = () => (
  <svg width="22" height="12" viewBox="0 0 22 12">
    {[0, 3, 6, 9, 12, 15, 18].map((x, i) => (
      <g key={x}>
        <rect x={x} y="0" width="2" height={12 - i} fill="#8fae1c" />
        <rect x={x} y={9 - i} width="2" height={3 + i} fill={i > 2 ? '#1d4f8c' : '#44691a'} />
      </g>
    ))}
  </svg>
);

export default function App() {
  return (
    <Page>
      <GlobalStyle />
      <TitleBar>
        <FxLogo $margin="5px 0 0 8px">FX</FxLogo>
        <TitleText>1447178: NordFX-Real4 - [AUDUSD,H1]</TitleText>
        <WindowButtons>
          <WindowButton $width={27} aria-label="Свернуть">
            <svg width="12" height="10" viewBox="0 0 12 10"><rect x=".5" y="5.500" width="11" height="3" fill="#fff" stroke="#444" /></svg>
          </WindowButton>
          <WindowButton $width={25} aria-label="Развернуть">
            <svg width="12" height="10" viewBox="0 0 12 10"><rect x="1.500" y="1.500" width="9" height="7" fill="none" stroke="#fff" strokeWidth="2" /><rect x="4.500" y="4" width="3" height="2" fill="#fff" /></svg>
          </WindowButton>
          <WindowButton $width={36} $close aria-label="Закрыть">
            <svg width="12" height="10" viewBox="0 0 12 10"><path d="M2 1l8 8M10 1L2 9" stroke="#fff" strokeWidth="2.500" /></svg>
          </WindowButton>
        </WindowButtons>
      </TitleBar>
      <Frame>
        <Edge />
        <Client>
          <MenuBar>
            {icons.app}
            {['Файл', 'Вид', 'Вставка', 'Графики', 'Сервис', 'Окно', 'Справка'].map(m => <MenuItem key={m}>{m}</MenuItem>)}
            <MdiButtons>
              <MdiButton aria-label="Свернуть график"><svg width="8" height="8"><path d="M1 6h5" stroke="#456" strokeWidth="2" /></svg></MdiButton>
              <MdiButton aria-label="Восстановить график"><svg width="9" height="9" fill="none"><path d="M3.500 3V1.500h5v4H7M1.500 4.500h5v4h-5z" stroke="#456" /></svg></MdiButton>
              <MdiButton aria-label="Закрыть график"><svg width="8" height="8"><path d="M1 1l6 6M7 1L1 7" stroke="#456" strokeWidth="2" /></svg></MdiButton>
            </MdiButtons>
          </MenuBar>
          <Toolbars />
          <Work>
            <Sidebar>
              <MarketWatch />
              <Navigator />
            </Sidebar>
            <Chart />
          </Work>
          <TerminalPanel />
          <StatusBar>
            <StatusCell>Для вызова справки нажмите F1</StatusCell>
            <StatusCell $width={109}>Default</StatusCell>
            <StatusCell $width={95}>2020.11.12 13:00</StatusCell>
            <StatusCell $width={67}>O: 0.72613</StatusCell>
            <StatusCell $width={66}>H: 0.72653</StatusCell>
            <StatusCell $width={64}>L: 0.72474</StatusCell>
            <StatusCell $width={65}>C: 0.72500</StatusCell>
            <StatusCell $width={62}>V: 5512</StatusCell>
            <StatusCell $width={132}><Traffic />81255/10 kb</StatusCell>
          </StatusBar>
        </Client>
      </Frame>
      <Taskbar>
        <StartButton aria-label="Пуск"><Orb /></StartButton>
        <TaskButton><Firefox />TLaP: Order Book - C...</TaskButton>
        <TaskButton $active><FxLogo>FX</FxLogo>1447178: NordFX-Re...</TaskButton>
        <TaskButton><TeamViewerIcon />TeamViewer</TaskButton>
        <Tray>
          <Language>RU</Language>
          {trayIcons}
          <Clock>1:02</Clock>
          <ShowDesktop aria-label="Показать рабочий стол" />
        </Tray>
      </Taskbar>
    </Page>
  );
}
